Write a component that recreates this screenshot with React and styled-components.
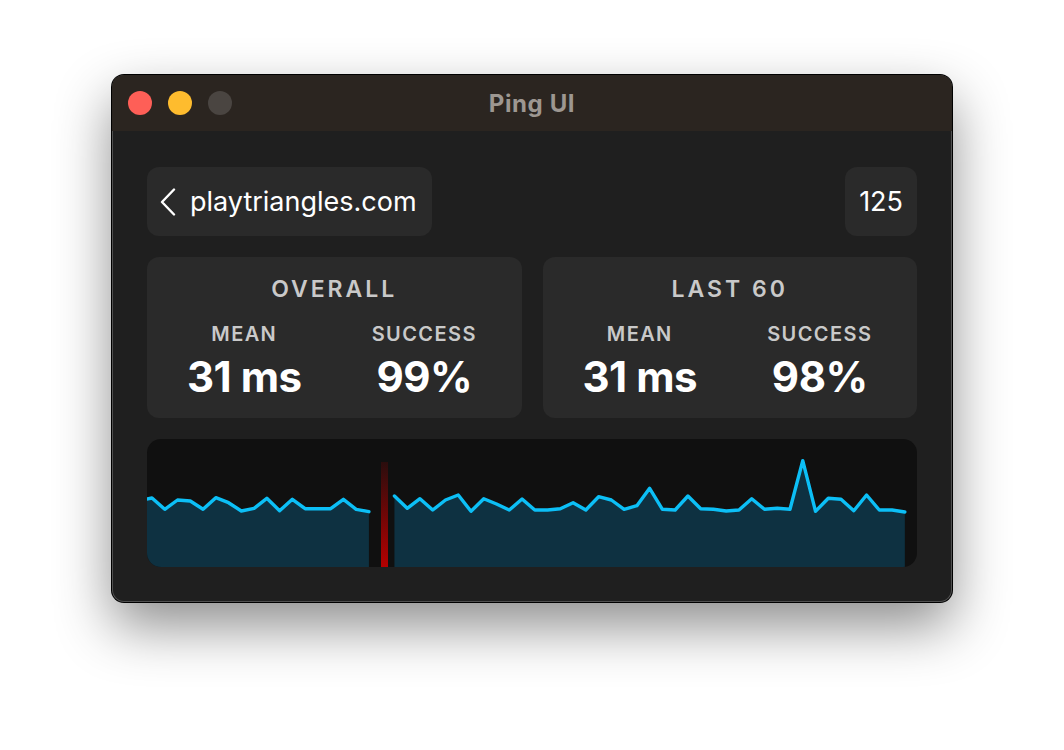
import styled, { createGlobalStyle } from "styled-components";

const GlobalStyle = createGlobalStyle`
  body {
    margin: 0;
    background: #ffffff;
    font-family: "Inter", "Liberation Sans", sans-serif;
  }
`;

const Page = styled.div`
  padding: 75px 0 0 112px;
  height: 750px;
  box-sizing: border-box;
`;

const Window = styled.div`
  width: 840px;
  height: 527px;
  box-sizing: border-box;
  border-radius: 12px;
  overflow: hidden;
  background: #1f1f1f;
  display: flex;
  flex-direction: column;
  box-shadow: 0 0 0 1px #000, inset 0 0 0 1px rgba(255, 255, 255, 0.22),
    0 24px 55px rgba(0, 0, 0, 0.45);
`;

const TitleBar = styled.div`
  height: 56px;
  flex-shrink: 0;
  background: #2b2520;
  display: flex;
  align-items: center;
  position: relative;
  padding-left: 16px;
  gap: 16px;
`;

const Light = styled.span`
  width: 24px;
  height: 24px;
  border-radius: 50%;
  background: ${(p) => p.$color};
`;

const Title = styled.div`
  position: absolute;
  left: 0;
  right: 0;
  text-align: center;
  font-size: 24px;
  font-weight: 700;
  letter-spacing: 0.6px;
  color: #9d9791;
  pointer-events: none;
`;

const Content = styled.div`
  flex: 1;
  padding: 36px 35px 34px;
  display: flex;
  flex-direction: column;
  gap: 21px;
`;

const TopRow = styled.div`
  display: flex;
  justify-content: space-between;
`;

const Pill = styled.div`
  height: 69px;
  box-sizing: border-box;
  background: #2a2a2a;
  border-radius: 12px;
  display: flex;
  align-items: center;
  gap: 14px;
  padding: 0 15px 0 13px;
  color: #ffffff;
  font-size: 27px;
`;

const Count = styled(Pill)`
  padding: 0 14px;
`;

const Cards = styled.div`
  display: grid;
  grid-template-columns: 1fr 1fr;
  gap: 21px;
`;

const Card = styled.div`
  background: #2a2a2a;
  border-radius: 12px;
  padding: 18px 0 16px;
  display: flex;
  flex-direction: column;
  align-items: center;
`;

const CardTitle = styled.div`
  font-size: 23px;
  line-height: 28px;
  font-weight: 600;
  letter-spacing: 3px;
  color: #c9c9c9;
  margin-bottom: 19px;
`;

const Columns = styled.div`
  display: grid;
  grid-template-columns: 180px 180px;
`;

const Column = styled.div`
  display: flex;
  flex-direction: column;
  align-items: center;
  gap: 6px;
`;

const Label = styled.div`
  font-size: 20px;
  line-height: 24px;
  font-weight: 600;
  letter-spacing: 1.4px;
  color: #c9c9c9;
`;

const Value = styled.div`
  font-size: 42px;
  line-height: 50px;
  font-weight: 700;
  color: #ffffff;
  letter-spacing: -0.5px;
`;

const ChartPanel = styled.div`
  height: 128px;
  border-radius: 14px;
  background: #101010;
  overflow: hidden;
  svg {
    display: block;
  }
`;

// y positions (from the top of the chart) for each ping sample
const firstRun = [
  59, 70.3, 61, 62, 70.3, 58.7, 63.7, 72, 69.3, 59.3, 71.7, 60.3, 69.7, 69.7,
  69.7, 60.3, 70.3, 72.7,
];
const secondRun = [
  57, 69.3, 59.7, 71, 61, 56, 72.3, 59.7, 65, 71, 60, 71, 71, 69.7, 63.7, 71,
  57.7, 61, 70.3, 66.7, 49.3, 70.3, 71, 57, 69.7, 70.3, 72, 71, 59.7, 70.3,
  69.3, 70.3, 21.7, 72.3, 59.3, 60.3, 71.7, 56, 71, 71, 73,
];

const STEP = 12.76;
const xAt = (i) => 5 + STEP * i;

const toPoints = (ys, start, lead) => {
  const pts = ys.map((y, k) => [xAt(start + k), y]);
  if (lead) pts.unshift(lead);
  return pts;
};

const Segment = ({ pts }) => {
  const line = pts.map(([x, y]) => `${x},${y}`).join(" ");
  const first = pts[0][0];
  const last = pts[pts.length - 1][0];
  return (
    <>
      <polygon points={`${first},128 ${line} ${last},128`} fill="#0e3141" />
      <polyline
        points={line}
        fill="none"
        stroke="#0cbff6"
        strokeWidth="3.4"
        strokeLinejoin="round"
        strokeLinecap="round"
      />
    </>
  );
};

const Chart = () => (
  <ChartPanel>
    <svg width="770" height="128" viewBox="0 0 770 128">
      <defs>
        <linearGradient id="lost" x1="0" y1="0" x2="0" y2="1">
          <stop offset="0" stopColor="#2a0d0d" />
          <stop offset="1" stopColor="#b40000" />
        </linearGradient>
      </defs>
      <Segment pts={toPoints(firstRun, 0, [-2, 60.5])} />
      <rect x="234" y="23" width="7" height="105" fill="url(#lost)" />
      <Segment pts={toPoints(secondRun, 19)} />
    </svg>
  </ChartPanel>
);

const StatCard = ({ title, mean, success }) => (
  <Card>
    <CardTitle>{title}</CardTitle>
    <Columns>
      <Column>
        <Label>MEAN</Label>
        <Value>{mean}</Value>
      </Column>
      <Column>
        <Label>SUCCESS</Label>
        <Value>{success}</Value>
      </Column>
    </Columns>
  </Card>
);

const App = () => {
  return (
    <Page>
      <GlobalStyle />
      <Window>
        <TitleBar>
          <Light $color="#fe5f57" />
          <Light $color="#febc2e" />
          <Light $color="#4a4541" />
          <Title>Ping UI</Title>
        </TitleBar>
        <Content>
          <TopRow>
            <Pill>
              <svg width="16" height="28" viewBox="0 0 16 28">
                <polyline
                  points="14,1.5 2,14 14,26.5"
                  fill="none"
                  stroke="#ffffff"
                  strokeWidth="2.4"
                  strokeLinecap="round"
                  strokeLinejoin="round"
                />
              </svg>
              playtriangles.com
            </Pill>
            <Count>125</Count>
          </TopRow>
          <Cards>
            <StatCard title="OVERALL" mean="31 ms" success="99%" />
            <StatCard title="LAST 60" mean="31 ms" success="98%" />
          </Cards>
          <Chart />
        </Content>
      </Window>
    </Page>
  );
};

export default App;
